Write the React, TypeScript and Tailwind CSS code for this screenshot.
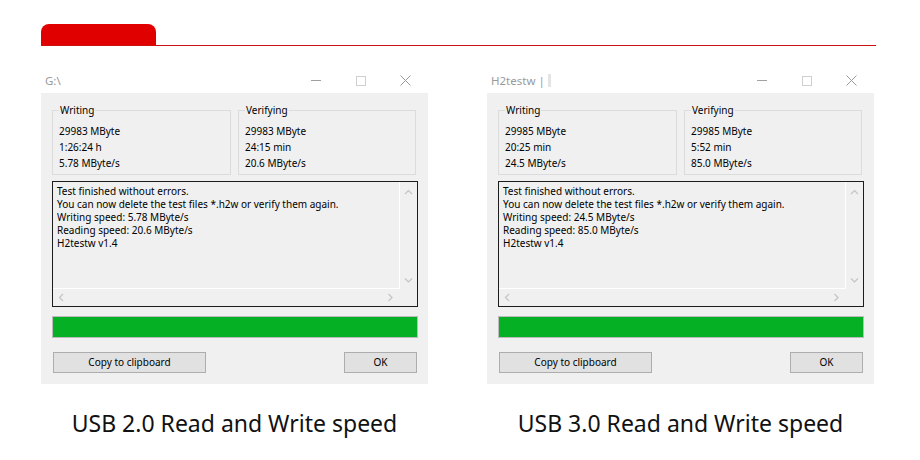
import React from "react";

const ui = { fontFamily: '"Noto Sans", "Open Sans", sans-serif' };

function Chevron({ dir }: { dir: "up" | "down" | "left" | "right" }) {
  const pts: Record<string, string> = {
    up: "1,5 4.5,1.5 8,5",
    down: "1,1.5 4.5,5 8,1.5",
    left: "5,1 1.5,4.5 5,8",
    right: "1.5,1 5,4.5 1.5,8",
  };
  const vertical = dir === "up" || dir === "down";
  return (
    <svg
      width={vertical ? 9 : 7}
      height={vertical ? 7 : 9}
      viewBox={vertical ? "0 0 9 7" : "0 0 7 9"}
      fill="none"
      stroke="#c4c4c4"
      strokeWidth="1.2"
    >
      <polyline points={pts[dir]} />
    </svg>
  );
}

function GroupBox({
  label,
  lines,
  width,
}: {
  label: string;
  lines: string[];
  width: string;
}) {
  return (
    <div className={`relative h-[65px] border border-[#dcdcdc] pl-[6px] pt-[12px] ${width}`}>
      <span className="absolute -top-[8px] left-[6px] bg-[#f0f0f0] px-[1px] text-[10px] leading-[14px] text-black">
        {label}
      </span>
      {lines.map((l) => (
        <div key={l} className="text-[10px] leading-[16px] text-black">
          {l}
        </div>
      ))}
    </div>
  );
}

function Dialog({
  title,
  bar,
  w,
  v,
  log,
}: {
  title: string;
  bar?: boolean;
  w: string[];
  v: string[];
  log: string[];
}) {
  return (
    <div className="flex w-[387px] flex-col" style={ui}>
      <div className="flex h-[25px] items-center bg-white">
        <div className="flex flex-1 items-center pl-[4px] text-[11.5px] text-[#9a9a9a]">
          <span>{title}</span>
          {bar && <span className="ml-[3px] h-[13px] w-[3px] bg-[#e4e4e4]" />}
        </div>
        <div className="flex h-full w-[45px] items-center justify-center">
          <div className="h-px w-[10px] bg-[#a0a0a0]" />
        </div>
        <div className="flex h-full w-[45px] items-center justify-center">
          <div className="h-[10px] w-[10px] border border-[#d0d0d0]" />
        </div>
        <div className="flex h-full w-[45px] items-center justify-center">
          <svg width="11" height="11" viewBox="0 0 11 11" stroke="#9a9a9a" strokeWidth="1">
            <line x1="0.5" y1="0.5" x2="10.5" y2="10.5" />
            <line x1="10.5" y1="0.5" x2="0.5" y2="10.5" />
          </svg>
        </div>
      </div>
      <div className="flex h-[291px] flex-col bg-[#f0f0f0] pl-[11px] pr-[10px] pt-[17px]">
        <div className="flex gap-[7px]">
          <GroupBox label="Writing" lines={w} width="w-[179px]" />
          <GroupBox label="Verifying" lines={v} width="w-[178px]" />
        </div>
        <div className="mt-[6px] grid h-[126px] grid-cols-[1fr_17px] grid-rows-[1fr_17px] border border-[#1c1c1c]">
          <div className="border-b border-r border-white pl-[4px] pt-[3px]">
            {log.map((l) => (
              <div key={l} className="whitespace-nowrap text-[10px] leading-[13px] text-black">
                {l}
              </div>
            ))}
          </div>
          <div className="flex flex-col items-center justify-between pb-[5px] pt-[7px]">
            <Chevron dir="up" />
            <Chevron dir="down" />
          </div>
          <div className="flex items-center justify-between pl-[5px] pr-[6px]">
            <Chevron dir="left" />
            <Chevron dir="right" />
          </div>
          <div />
        </div>
        <div className="mt-[9px] h-[22px] border border-[#bcbcbc] bg-[#06b025]" />
        <div className="mt-[14px] flex justify-between pl-px pr-px">
          <div className="flex h-[21px] w-[153px] items-center justify-center border border-[#adadad] bg-[#e1e1e1] text-[10px] text-black">
            Copy to clipboard
          </div>
          <div className="flex h-[21px] w-[73px] items-center justify-center border border-[#adadad] bg-[#e1e1e1] text-[10px] text-black">
            OK
          </div>
        </div>
      </div>
      <div className="mt-[23px] text-center text-[23px] leading-[32px] text-[#111]">
        {bar ? "USB 3.0 Read and Write speed" : "USB 2.0 Read and Write speed"}
      </div>
    </div>
  );
}

export default function App() {
  return (
    <div className="h-[460px] w-[920px] overflow-hidden bg-white" style={ui}>
      <div className="ml-[41px] mt-[24px] flex w-[835px] flex-col">
        <div className="h-[21px] w-[115px] rounded-t-[8px] bg-[#e00000]" />
        <div className="h-px w-full bg-[#d01010]" />
      </div>
      <div className="ml-[41px] mt-[22px] flex gap-[59px]">
        <Dialog
          title="G:\"
          w={["29983 MByte", "1:26:24 h", "5.78 MByte/s"]}
          v={["29983 MByte", "24:15 min", "20.6 MByte/s"]}
          log={[
            "Test finished without errors.",
            "You can now delete the test files *.h2w or verify them again.",
            "Writing speed: 5.78 MByte/s",
            "Reading speed: 20.6 MByte/s",
            "H2testw v1.4",
          ]}
        />
        <Dialog
          title="H2testw |"
          bar
          w={["29985 MByte", "20:25 min", "24.5 MByte/s"]}
          v={["29985 MByte", "5:52 min", "85.0 MByte/s"]}
          log={[
            "Test finished without errors.",
            "You can now delete the test files *.h2w or verify them again.",
            "Writing speed: 24.5 MByte/s",
            "Reading speed: 85.0 MByte/s",
            "H2testw v1.4",
          ]}
        />
      </div>
    </div>
  );
}
